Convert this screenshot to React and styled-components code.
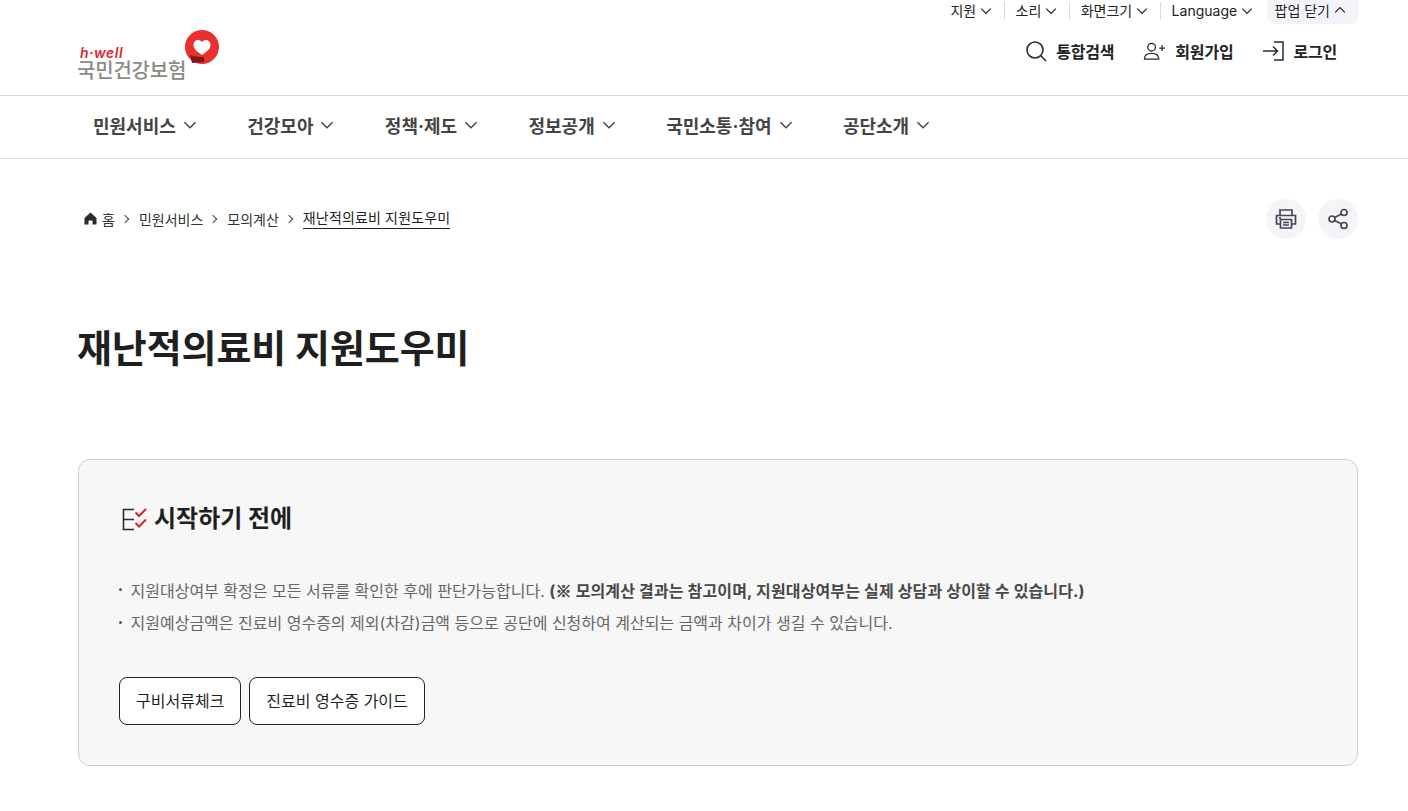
import React from 'react';
import styled, { createGlobalStyle } from 'styled-components';

const GlobalStyle = createGlobalStyle`
  * { box-sizing: border-box; }
  html, body { margin: 0; padding: 0; background: #fff; }
  body {
    font-family: Inter, "Noto Sans CJK KR", "Noto Sans", sans-serif;
    color: #1f1f1f;
    overflow: hidden;
  }
`;

const Chevron = ({ size = 12, up }) => (
  <svg width={size} height={size} viewBox="0 0 10 10" fill="none" stroke="currentColor" strokeWidth="1">
    <path d={up ? 'M1 7l4-4 4 4' : 'M1 3l4 4 4-4'} />
  </svg>
);

const menus = ['민원서비스', '건강모아', '정책·제도', '정보공개', '국민소통·참여', '공단소개'];

const App = () => {
  return (
    <Page>
      <GlobalStyle />
      <Header>
        <UtilBar>
          <UtilItem>지원 <Chevron /></UtilItem>
          <UtilItem $line>소리 <Chevron /></UtilItem>
          <UtilItem $line>화면크기 <Chevron /></UtilItem>
          <UtilItem $line>Language <Chevron /></UtilItem>
          <PopupToggle>팝업 닫기 <Chevron up /></PopupToggle>
        </UtilBar>
        <HeaderMain>
          <Logo>
            <LogoWords>
              <LogoTag>h·well</LogoTag>
              <LogoName>국민건강보험</LogoName>
            </LogoWords>
            <LogoMark width="38" height="38" viewBox="0 0 38 38">
              <circle cx="19" cy="17" r="17" fill="#e8312f" />
              <path d="M19 25c-5-3.500-8.500-6-8.500-10C10.500 11.800 12.800 10 15 10c1.800 0 3.200 .8 4 2.300C19.800 10.800 21.200 10 23 10c2.200 0 4.500 1.800 4.500 5 0 4-3.500 6.500-8.500 10z" fill="#fff" />
              <path d="M7 25c4.500 1.500 9 2 14 2v5l-12 1z" fill="#7f1618" />
            </LogoMark>
          </Logo>
          <HeaderLinks>
            <HeaderLink>
              <svg width="22" height="22" viewBox="0 0 22 22" fill="none" stroke="#2b2b2b" strokeWidth="1.6">
                <circle cx="10" cy="10" r="8" />
                <path d="M16 16l5 5" />
              </svg>
              통합검색
            </HeaderLink>
            <HeaderLink>
              <svg width="23" height="20" viewBox="0 0 24 20" fill="none" stroke="#2b2b2b" strokeWidth="1.4">
                <circle cx="9" cy="6" r="4" />
                <path d="M1.500 18.500c0-4 3-6 7.500-6s7.500 2 7.500 6z" />
                <path d="M17 7h6M20 4v6" />
              </svg>
              회원가입
            </HeaderLink>
            <HeaderLink>
              <svg width="22" height="20" viewBox="0 0 22 20" fill="none" stroke="#2b2b2b" strokeWidth="1.5">
                <path d="M1 10h14M11 5.500l4.500 4.500-4.500 4.500" />
                <path d="M12 1h9v18h-9" />
              </svg>
              로그인
            </HeaderLink>
          </HeaderLinks>
        </HeaderMain>
      </Header>

      <Nav>
        {menus.map((m) => (
          <NavItem key={m}>
            {m}
            <Chevron size={14} />
          </NavItem>
        ))}
      </Nav>

      <Content>
        <BreadcrumbRow>
          <Breadcrumb>
            <HomeIcon width="13" height="13" viewBox="0 0 13 13" fill="#2b2b2b">
              <path d="M6.500 0.500L0.500 6v6.500h4V8.500h4v4h4V6z" />
            </HomeIcon>
            <span>홈</span>
            <Sep />
            <span>민원서비스</span>
            <Sep />
            <span>모의계산</span>
            <Sep />
            <CurrentCrumb>재난적의료비 지원도우미</CurrentCrumb>
          </Breadcrumb>
          <RoundActions>
            <RoundButton>
              <svg width="24" height="24" viewBox="0 0 24 24" fill="none" stroke="#44465a" strokeWidth="1.7">
                <path d="M6 8V3h12v5" />
                <path d="M6 17H2.500V8.500h19V17H18" />
                <path d="M6.500 12.500h11V21h-11z" />
                <path d="M9 15.500h6M9 18h6M5 10.800h2" />
              </svg>
            </RoundButton>
            <RoundButton>
              <svg width="22" height="22" viewBox="0 0 22 22" fill="none" stroke="#44465a" strokeWidth="1.7">
                <circle cx="5" cy="11" r="3" />
                <circle cx="17" cy="4.500" r="3" />
                <circle cx="17" cy="17.500" r="3" />
                <path d="M7.700 9.500l6.700-3.600M7.700 12.500l6.700 3.600" />
              </svg>
            </RoundButton>
          </RoundActions>
        </BreadcrumbRow>

        <Title>재난적의료비 지원도우미</Title>

        <NoticeBox>
          <NoticeTitle>
            <svg width="25" height="23" viewBox="0 0 25 23" fill="none" stroke="#2b2b2b" strokeWidth="1.6">
              <path d="M12 1.500H1.500v20H12M1.500 11.500H12" />
              <path d="M13.500 4.500l3.500 3.500 7-7M13.500 15l3.500 3.500 7-7" stroke="#d7262b" strokeWidth="2" />
            </svg>
            시작하기 전에
          </NoticeTitle>
          <NoticeList>
            <NoticeItem>
              지원대상여부 확정은 모든 서류를 확인한 후에 판단가능합니다.{' '}
              <strong>(<RefMark>※</RefMark> 모의계산 결과는 참고이며, 지원대상여부는 실제 상담과 상이할 수 있습니다.)</strong>
            </NoticeItem>
            <NoticeItem>
              지원예상금액은 진료비 영수증의 제외(차감)금액 등으로 공단에 신청하여 계산되는 금액과 차이가 생길 수 있습니다.
            </NoticeItem>
          </NoticeList>
          <ButtonRow>
            <OutlineButton>구비서류체크</OutlineButton>
            <OutlineButton>진료비 영수증 가이드</OutlineButton>
          </ButtonRow>
        </NoticeBox>
      </Content>
    </Page>
  );
};

export default App;

const Page = styled.div`
  width: 1408px;
  height: 811px;
  overflow: hidden;
  background: #fff;
`;

const Header = styled.header`
  height: 96px;
  padding: 0 50px 0 78px;
  border-bottom: 1px solid #d9d9d9;
`;

const UtilBar = styled.div`
  display: flex;
  justify-content: flex-end;
  align-items: flex-start;
  height: 24px;
  font-size: 14px;
  color: #222;
`;

const UtilItem = styled.div`
  display: flex;
  align-items: center;
  gap: 4px;
  height: 17px;
  margin-top: 2px;
  padding: 0 11.4px 0 11px;
  border-left: ${(p) => (p.$line ? '1px solid #d9d9d9' : 'none')};
  line-height: 15px;
`;

const PopupToggle = styled.div`
  display: flex;
  align-items: center;
  gap: 4px;
  height: 24px;
  padding: 0 12px 5px 8px;
  margin-left: 2px;
  background: #f3f4f9;
  border-radius: 0 0 8px 8px;
`;

const HeaderMain = styled.div`
  display: flex;
  justify-content: space-between;
  align-items: flex-start;
  height: 71px;
`;

const Logo = styled.div`
  display: flex;
  align-items: flex-start;
  margin: 6px 0 0 -1px;
`;

const LogoWords = styled.div`
  display: flex;
  flex-direction: column;
  margin-top: 15px;
`;

const LogoTag = styled.span`
  font-size: 14px;
  line-height: 15px;
  font-weight: 600;
  font-style: italic;
  letter-spacing: 0.5px;
  color: #d9272e;
  padding-left: 3px;
`;

const LogoName = styled.span`
  font-size: 20px;
  line-height: 22px;
  font-weight: 500;
  color: #8b8b84;
  letter-spacing: -0.2px;
`;

const LogoMark = styled.svg`
  margin-left: -3px;
`;

const HeaderLinks = styled.div`
  display: flex;
  align-items: center;
  gap: 29px;
  height: 54px;
  padding-right: 21px;
`;

const HeaderLink = styled.a`
  display: flex;
  align-items: center;
  gap: 9px;
  font-size: 16px;
  font-weight: 700;
  letter-spacing: -0.2px;
  color: #222;
`;

const Nav = styled.nav`
  display: flex;
  align-items: center;
  gap: 50.4px;
  height: 63px;
  padding: 0 0 4px 93px;
  border-bottom: 1px solid #d9d9d9;
`;

const NavItem = styled.a`
  display: flex;
  align-items: center;
  gap: 7px;
  font-size: 18px;
  font-weight: 700;
  color: #444;
`;

const Content = styled.main`
  padding: 0 50px 0 78px;
`;

const BreadcrumbRow = styled.div`
  display: flex;
  justify-content: space-between;
  align-items: center;
  margin-top: 40px;
  height: 40px;
`;

const Breadcrumb = styled.div`
  display: flex;
  align-items: center;
  padding: 0 0 1px 6px;
  font-size: 14px;
  color: #333;
`;

const HomeIcon = styled.svg`
  margin-right: 5px;
`;

const Sep = styled.i`
  width: 6px;
  height: 6px;
  margin: 0 11px 0 7px;
  border-top: 1px solid #444;
  border-right: 1px solid #444;
  transform: rotate(45deg);
`;

const CurrentCrumb = styled.span`
  color: #222;
  border-bottom: 1px solid #222;
  line-height: 20px;
  letter-spacing: 0.15px;
`;

const RoundActions = styled.div`
  display: flex;
  gap: 12px;
`;

const RoundButton = styled.button`
  display: flex;
  align-items: center;
  justify-content: center;
  width: 40px;
  height: 40px;
  padding: 0;
  border: 0;
  border-radius: 50%;
  background: #f5f5f7;
`;

const Title = styled.h1`
  margin: 85px 0 87px -1px;
  font-size: 38px;
  line-height: 48px;
  font-weight: 700;
  letter-spacing: -0.1px;
  color: #1f1f1f;
`;

const NoticeBox = styled.section`
  height: 307px;
  padding: 41px 40px 40px;
  background: #f7f7f7;
  border: 1px solid #cfcfcf;
  border-radius: 12px;
`;

const NoticeTitle = styled.h2`
  display: flex;
  align-items: center;
  gap: 7px;
  margin: 0;
  padding-left: 3px;
  font-size: 24px;
  line-height: 36px;
  font-weight: 700;
  color: #1f1f1f;
`;

const NoticeList = styled.ul`
  list-style: none;
  margin: 37px 0 0;
  padding: 0;
`;

const NoticeItem = styled.li`
  position: relative;
  padding-left: 11.5px;
  font-size: 16px;
  line-height: 32px;
  color: #666;

  &::before {
    content: '';
    position: absolute;
    left: 0;
    top: 14px;
    width: 3px;
    height: 3px;
    background: #555;
    border-radius: 50%;
  }

  strong {
    font-weight: 700;
    letter-spacing: 0.15px;
    color: #484848;
  }
`;

const RefMark = styled.span`
  font-family: "Noto Sans CJK KR", sans-serif;
  -webkit-text-stroke: 0.6px #484848;
`;

const ButtonRow = styled.div`
  display: flex;
  gap: 8px;
  margin-top: 38px;
`;

const OutlineButton = styled.button`
  height: 48px;
  padding: 0 16px 3px;
  font-family: inherit;
  font-size: 16px;
  color: #1f1f1f;
  background: #fff;
  border: 1px solid #222;
  border-radius: 8px;
`;
